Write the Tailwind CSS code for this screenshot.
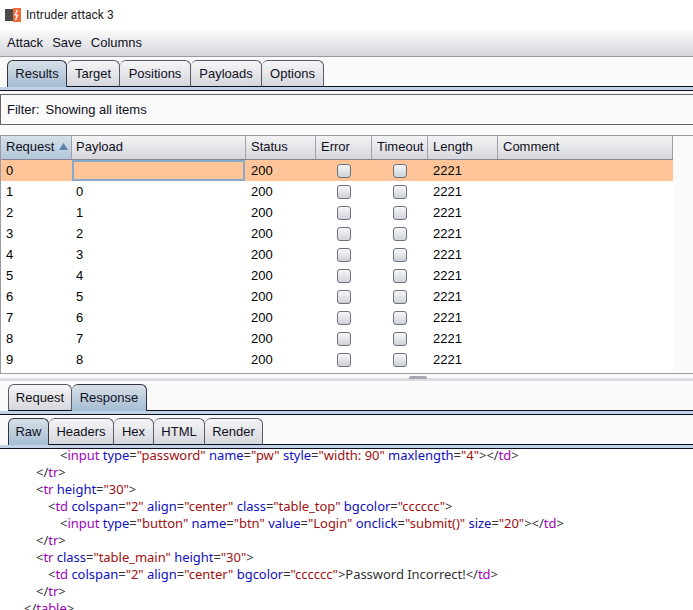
<!DOCTYPE html>
<html>
<head>
<meta charset="utf-8">
<script src="https://cdn.jsdelivr.net/npm/@tailwindcss/browser@4"></script>
</head>
<body class="w-[693px] h-[610px] overflow-hidden bg-[#fafafa] font-['Liberation_Sans',sans-serif] text-[13px] text-[#10101c]">
<div class="h-[30px] bg-white flex items-center pl-[5px] gap-[5px]">
  <svg width="16" height="14" viewBox="0 0 16 14"><rect x="0" y="1" width="8" height="12" fill="#4a4a4a"/><rect x="8" y="0" width="8" height="14" fill="#ee6a3a"/><path d="M12.5 2 L10 7 H12.5 L10.5 12" fill="none" stroke="#fff" stroke-width="1.2"/></svg>
  <span class="font-['Roboto',sans-serif] text-[12px] text-[#222]">Intruder attack 3</span>
</div>
<div class="h-[27px] bg-gradient-to-b from-[#fbfbfb] to-[#d6d7dc] border-b border-[#9a9aa6] flex items-center pl-[7px] gap-[9px]">
  <span>Attack</span><span>Save</span><span>Columns</span>
</div>
<div class="h-[34px] pt-[3px] flex flex-col">
  <div class="flex pl-[7px] h-[27px]">
    <div class="h-full w-[60px] flex items-center justify-center border border-[#2f3440] border-b-0 rounded-t-[6px] bg-gradient-to-b from-[#d8dfe8] to-[#a4bdd3]">Results</div>
    <div class="h-full w-[53px] flex items-center justify-center border-t border-r border-[#555a66] border-b border-b-[#0c1020] rounded-t-[6px] bg-gradient-to-b from-[#f6f6f8] to-[#d6d7dc]">Target</div>
    <div class="h-full w-[71px] flex items-center justify-center border-t border-r border-[#555a66] border-b border-b-[#0c1020] rounded-t-[6px] bg-gradient-to-b from-[#f6f6f8] to-[#d6d7dc]">Positions</div>
    <div class="h-full w-[71px] flex items-center justify-center border-t border-r border-[#555a66] border-b border-b-[#0c1020] rounded-t-[6px] bg-gradient-to-b from-[#f6f6f8] to-[#d6d7dc]">Payloads</div>
    <div class="h-full w-[62px] flex items-center justify-center border-t border-r border-[#555a66] border-b border-b-[#0c1020] rounded-t-[6px] bg-gradient-to-b from-[#f6f6f8] to-[#d6d7dc]">Options</div>
    <div class="flex-1 border-b border-[#0c1020]"></div>
  </div>
  <div class="h-[4px] bg-[#c0d2e3] border-b border-[#0c1020]"></div>
</div>
<div class="h-[31px] mt-[3px] border-y border-[#666] flex items-center pl-[6px] gap-[6px] border-l">
  <span>Filter:</span><span>Showing all items</span>
</div>
<div class="mt-[10px] h-[239px] border-t border-b border-l border-[#9a9aa6] w-full">
  <div class="w-[672px] h-[24px] grid grid-cols-[71px_174px_70px_56px_56px_70px_175px] border-b border-[#85858f]">
    <div class="flex items-center pl-[5px] pb-[2px] gap-[5px] border-r border-[#a0a0aa] bg-gradient-to-b from-[#d5e0ea] to-[#b3c8da]">Request <svg width="9" height="7" viewBox="0 0 9 7"><path d="M4.5 0 L9 7 H0 Z" fill="#5d83ab"/></svg></div>
    <div class="flex items-center pl-[4px] pb-[2px] border-r border-[#a0a0aa] bg-gradient-to-b from-[#f3f3f5] to-[#d7d8dd]">Payload</div>
    <div class="flex items-center pl-[5px] pb-[2px] border-r border-[#a0a0aa] bg-gradient-to-b from-[#f3f3f5] to-[#d7d8dd]">Status</div>
    <div class="flex items-center pl-[5px] pb-[2px] border-r border-[#a0a0aa] bg-gradient-to-b from-[#f3f3f5] to-[#d7d8dd]">Error</div>
    <div class="flex items-center pl-[5px] pb-[2px] border-r border-[#a0a0aa] bg-gradient-to-b from-[#f3f3f5] to-[#d7d8dd]">Timeout</div>
    <div class="flex items-center pl-[5px] pb-[2px] border-r border-[#a0a0aa] bg-gradient-to-b from-[#f3f3f5] to-[#d7d8dd]">Length</div>
    <div class="flex items-center pl-[5px] pb-[2px] border-r border-[#a0a0aa] bg-gradient-to-b from-[#f3f3f5] to-[#d7d8dd]">Comment</div>
  </div>
  <div class="w-[672px] h-[213px] bg-white text-black">
    <div class="h-[21px] grid grid-cols-[71px_174px_70px_56px_56px_70px_175px] bg-[#ffc599] items-center">
      <div class="pl-[5px]">0</div><div class="h-full mr-[1px] border-2 border-[#86a9cc]"></div><div class="pl-[5px]">200</div>
      <div class="flex justify-center"><div class="w-[14px] h-[14px] rounded-[3px] border border-[#70707a] bg-gradient-to-b from-[#f8f8fa] to-[#cfd2da]"></div></div>
      <div class="flex justify-center"><div class="w-[14px] h-[14px] rounded-[3px] border border-[#70707a] bg-gradient-to-b from-[#f8f8fa] to-[#cfd2da]"></div></div>
      <div class="pl-[5px]">2221</div><div></div>
    </div>
    <div class="h-[21px] grid grid-cols-[71px_174px_70px_56px_56px_70px_175px] items-center"><div class="pl-[5px]">1</div><div class="pl-[4px]">0</div><div class="pl-[5px]">200</div><div class="flex justify-center"><div class="w-[14px] h-[14px] rounded-[3px] border border-[#70707a] bg-gradient-to-b from-[#f8f8fa] to-[#cfd2da]"></div></div><div class="flex justify-center"><div class="w-[14px] h-[14px] rounded-[3px] border border-[#70707a] bg-gradient-to-b from-[#f8f8fa] to-[#cfd2da]"></div></div><div class="pl-[5px]">2221</div><div></div></div>
    <div class="h-[21px] grid grid-cols-[71px_174px_70px_56px_56px_70px_175px] items-center"><div class="pl-[5px]">2</div><div class="pl-[4px]">1</div><div class="pl-[5px]">200</div><div class="flex justify-center"><div class="w-[14px] h-[14px] rounded-[3px] border border-[#70707a] bg-gradient-to-b from-[#f8f8fa] to-[#cfd2da]"></div></div><div class="flex justify-center"><div class="w-[14px] h-[14px] rounded-[3px] border border-[#70707a] bg-gradient-to-b from-[#f8f8fa] to-[#cfd2da]"></div></div><div class="pl-[5px]">2221</div><div></div></div>
    <div class="h-[21px] grid grid-cols-[71px_174px_70px_56px_56px_70px_175px] items-center"><div class="pl-[5px]">3</div><div class="pl-[4px]">2</div><div class="pl-[5px]">200</div><div class="flex justify-center"><div class="w-[14px] h-[14px] rounded-[3px] border border-[#70707a] bg-gradient-to-b from-[#f8f8fa] to-[#cfd2da]"></div></div><div class="flex justify-center"><div class="w-[14px] h-[14px] rounded-[3px] border border-[#70707a] bg-gradient-to-b from-[#f8f8fa] to-[#cfd2da]"></div></div><div class="pl-[5px]">2221</div><div></div></div>
    <div class="h-[21px] grid grid-cols-[71px_174px_70px_56px_56px_70px_175px] items-center"><div class="pl-[5px]">4</div><div class="pl-[4px]">3</div><div class="pl-[5px]">200</div><div class="flex justify-center"><div class="w-[14px] h-[14px] rounded-[3px] border border-[#70707a] bg-gradient-to-b from-[#f8f8fa] to-[#cfd2da]"></div></div><div class="flex justify-center"><div class="w-[14px] h-[14px] rounded-[3px] border border-[#70707a] bg-gradient-to-b from-[#f8f8fa] to-[#cfd2da]"></div></div><div class="pl-[5px]">2221</div><div></div></div>
    <div class="h-[21px] grid grid-cols-[71px_174px_70px_56px_56px_70px_175px] items-center"><div class="pl-[5px]">5</div><div class="pl-[4px]">4</div><div class="pl-[5px]">200</div><div class="flex justify-center"><div class="w-[14px] h-[14px] rounded-[3px] border border-[#70707a] bg-gradient-to-b from-[#f8f8fa] to-[#cfd2da]"></div></div><div class="flex justify-center"><div class="w-[14px] h-[14px] rounded-[3px] border border-[#70707a] bg-gradient-to-b from-[#f8f8fa] to-[#cfd2da]"></div></div><div class="pl-[5px]">2221</div><div></div></div>
    <div class="h-[21px] grid grid-cols-[71px_174px_70px_56px_56px_70px_175px] items-center"><div class="pl-[5px]">6</div><div class="pl-[4px]">5</div><div class="pl-[5px]">200</div><div class="flex justify-center"><div class="w-[14px] h-[14px] rounded-[3px] border border-[#70707a] bg-gradient-to-b from-[#f8f8fa] to-[#cfd2da]"></div></div><div class="flex justify-center"><div class="w-[14px] h-[14px] rounded-[3px] border border-[#70707a] bg-gradient-to-b from-[#f8f8fa] to-[#cfd2da]"></div></div><div class="pl-[5px]">2221</div><div></div></div>
    <div class="h-[21px] grid grid-cols-[71px_174px_70px_56px_56px_70px_175px] items-center"><div class="pl-[5px]">7</div><div class="pl-[4px]">6</div><div class="pl-[5px]">200</div><div class="flex justify-center"><div class="w-[14px] h-[14px] rounded-[3px] border border-[#70707a] bg-gradient-to-b from-[#f8f8fa] to-[#cfd2da]"></div></div><div class="flex justify-center"><div class="w-[14px] h-[14px] rounded-[3px] border border-[#70707a] bg-gradient-to-b from-[#f8f8fa] to-[#cfd2da]"></div></div><div class="pl-[5px]">2221</div><div></div></div>
    <div class="h-[21px] grid grid-cols-[71px_174px_70px_56px_56px_70px_175px] items-center"><div class="pl-[5px]">8</div><div class="pl-[4px]">7</div><div class="pl-[5px]">200</div><div class="flex justify-center"><div class="w-[14px] h-[14px] rounded-[3px] border border-[#70707a] bg-gradient-to-b from-[#f8f8fa] to-[#cfd2da]"></div></div><div class="flex justify-center"><div class="w-[14px] h-[14px] rounded-[3px] border border-[#70707a] bg-gradient-to-b from-[#f8f8fa] to-[#cfd2da]"></div></div><div class="pl-[5px]">2221</div><div></div></div>
    <div class="h-[21px] grid grid-cols-[71px_174px_70px_56px_56px_70px_175px] items-center"><div class="pl-[5px]">9</div><div class="pl-[4px]">8</div><div class="pl-[5px]">200</div><div class="flex justify-center"><div class="w-[14px] h-[14px] rounded-[3px] border border-[#70707a] bg-gradient-to-b from-[#f8f8fa] to-[#cfd2da]"></div></div><div class="flex justify-center"><div class="w-[14px] h-[14px] rounded-[3px] border border-[#70707a] bg-gradient-to-b from-[#f8f8fa] to-[#cfd2da]"></div></div><div class="pl-[5px]">2221</div><div></div></div>
  </div>
</div>
<div class="h-[7px] pt-[2px] bg-gradient-to-b from-[#fafafa] from-50% to-[#dcdde2] to-50% flex justify-center"><div class="w-[18px] h-[3px] bg-[#a8a8b2] rounded-t-[2px] ml-[142px]"></div></div>
<div class="flex pl-[8px] h-[27px] pt-[3px] box-content">
  <div class="w-[64px] flex items-center justify-center border border-[#555a66] border-b-[#0c1020] rounded-t-[6px] bg-gradient-to-b from-[#f6f6f8] to-[#d6d7dc]">Request</div>
  <div class="w-[75px] flex items-center justify-center border-t border-r border-[#2f3440] rounded-t-[6px] bg-gradient-to-b from-[#d8dfe8] to-[#a4bdd3]">Response</div>
  <div class="flex-1 border-b border-[#0c1020]"></div>
</div>
<div class="h-[4px] bg-[#c0d2e3] border-b border-[#0c1020]"></div>
<div class="flex pl-[8px] h-[27px] pt-[3px] box-content">
  <div class="w-[41px] flex items-center justify-center border border-[#2f3440] border-b-0 rounded-t-[6px] bg-gradient-to-b from-[#d8dfe8] to-[#a4bdd3]">Raw</div>
  <div class="w-[65px] flex items-center justify-center border-t border-r border-[#555a66] border-b border-b-[#0c1020] rounded-t-[6px] bg-gradient-to-b from-[#f6f6f8] to-[#d6d7dc]">Headers</div>
  <div class="w-[40px] flex items-center justify-center border-t border-r border-[#555a66] border-b border-b-[#0c1020] rounded-t-[6px] bg-gradient-to-b from-[#f6f6f8] to-[#d6d7dc]">Hex</div>
  <div class="w-[51px] flex items-center justify-center border-t border-r border-[#555a66] border-b border-b-[#0c1020] rounded-t-[6px] bg-gradient-to-b from-[#f6f6f8] to-[#d6d7dc]">HTML</div>
  <div class="w-[58px] flex items-center justify-center border-t border-r border-[#555a66] border-b border-b-[#0c1020] rounded-t-[6px] bg-gradient-to-b from-[#f6f6f8] to-[#d6d7dc]">Render</div>
  <div class="flex-1 border-b border-[#0c1020]"></div>
</div>
<div class="h-[4px] bg-[#c0d2e3] border-b border-[#0c1020]"></div>
<div class="bg-white h-[161px] overflow-hidden font-['Noto_Sans',sans-serif] text-[13px] leading-[17px] tracking-[-0.03px] whitespace-nowrap text-[#333]">
  <div class="pl-[60px] leading-[13px] mb-[2px]">&lt;<span class="text-[#a000c0]">input</span> <span class="text-[#1010c0]">type</span>=<span class="text-[#a01010]">"password"</span> <span class="text-[#1010c0]">name</span>=<span class="text-[#a01010]">"pw"</span> <span class="text-[#1010c0]">style</span>=<span class="text-[#a01010]">"width: 90"</span> <span class="text-[#1010c0]">maxlength</span>=<span class="text-[#a01010]">"4"</span>&gt;&lt;/<span class="text-[#a000c0]">td</span>&gt;</div>
  <div class="pl-[36px]">&lt;/<span class="text-[#a000c0]">tr</span>&gt;</div>
  <div class="pl-[36px]">&lt;<span class="text-[#a000c0]">tr</span> <span class="text-[#1010c0]">height</span>=<span class="text-[#a01010]">"30"</span>&gt;</div>
  <div class="pl-[48px]">&lt;<span class="text-[#a000c0]">td</span> <span class="text-[#1010c0]">colspan</span>=<span class="text-[#a01010]">"2"</span> <span class="text-[#1010c0]">align</span>=<span class="text-[#a01010]">"center"</span> <span class="text-[#1010c0]">class</span>=<span class="text-[#a01010]">"table_top"</span> <span class="text-[#1010c0]">bgcolor</span>=<span class="text-[#a01010]">"cccccc"</span>&gt;</div>
  <div class="pl-[60px]">&lt;<span class="text-[#a000c0]">input</span> <span class="text-[#1010c0]">type</span>=<span class="text-[#a01010]">"button"</span> <span class="text-[#1010c0]">name</span>=<span class="text-[#a01010]">"btn"</span> <span class="text-[#1010c0]">value</span>=<span class="text-[#a01010]">"Login"</span> <span class="text-[#1010c0]">onclick</span>=<span class="text-[#a01010]">"submit()"</span> <span class="text-[#1010c0]">size</span>=<span class="text-[#a01010]">"20"</span>&gt;&lt;/<span class="text-[#a000c0]">td</span>&gt;</div>
  <div class="pl-[36px]">&lt;/<span class="text-[#a000c0]">tr</span>&gt;</div>
  <div class="pl-[36px]">&lt;<span class="text-[#a000c0]">tr</span> <span class="text-[#1010c0]">class</span>=<span class="text-[#a01010]">"table_main"</span> <span class="text-[#1010c0]">height</span>=<span class="text-[#a01010]">"30"</span>&gt;</div>
  <div class="pl-[48px]">&lt;<span class="text-[#a000c0]">td</span> <span class="text-[#1010c0]">colspan</span>=<span class="text-[#a01010]">"2"</span> <span class="text-[#1010c0]">align</span>=<span class="text-[#a01010]">"center"</span> <span class="text-[#1010c0]">bgcolor</span>=<span class="text-[#a01010]">"cccccc"</span>&gt;Password Incorrect!&lt;/<span class="text-[#a000c0]">td</span>&gt;</div>
  <div class="pl-[36px]">&lt;/<span class="text-[#a000c0]">tr</span>&gt;</div>
  <div class="pl-[24px]">&lt;/<span class="text-[#a000c0]">table</span>&gt;</div>
</div>
</body>
</html>
